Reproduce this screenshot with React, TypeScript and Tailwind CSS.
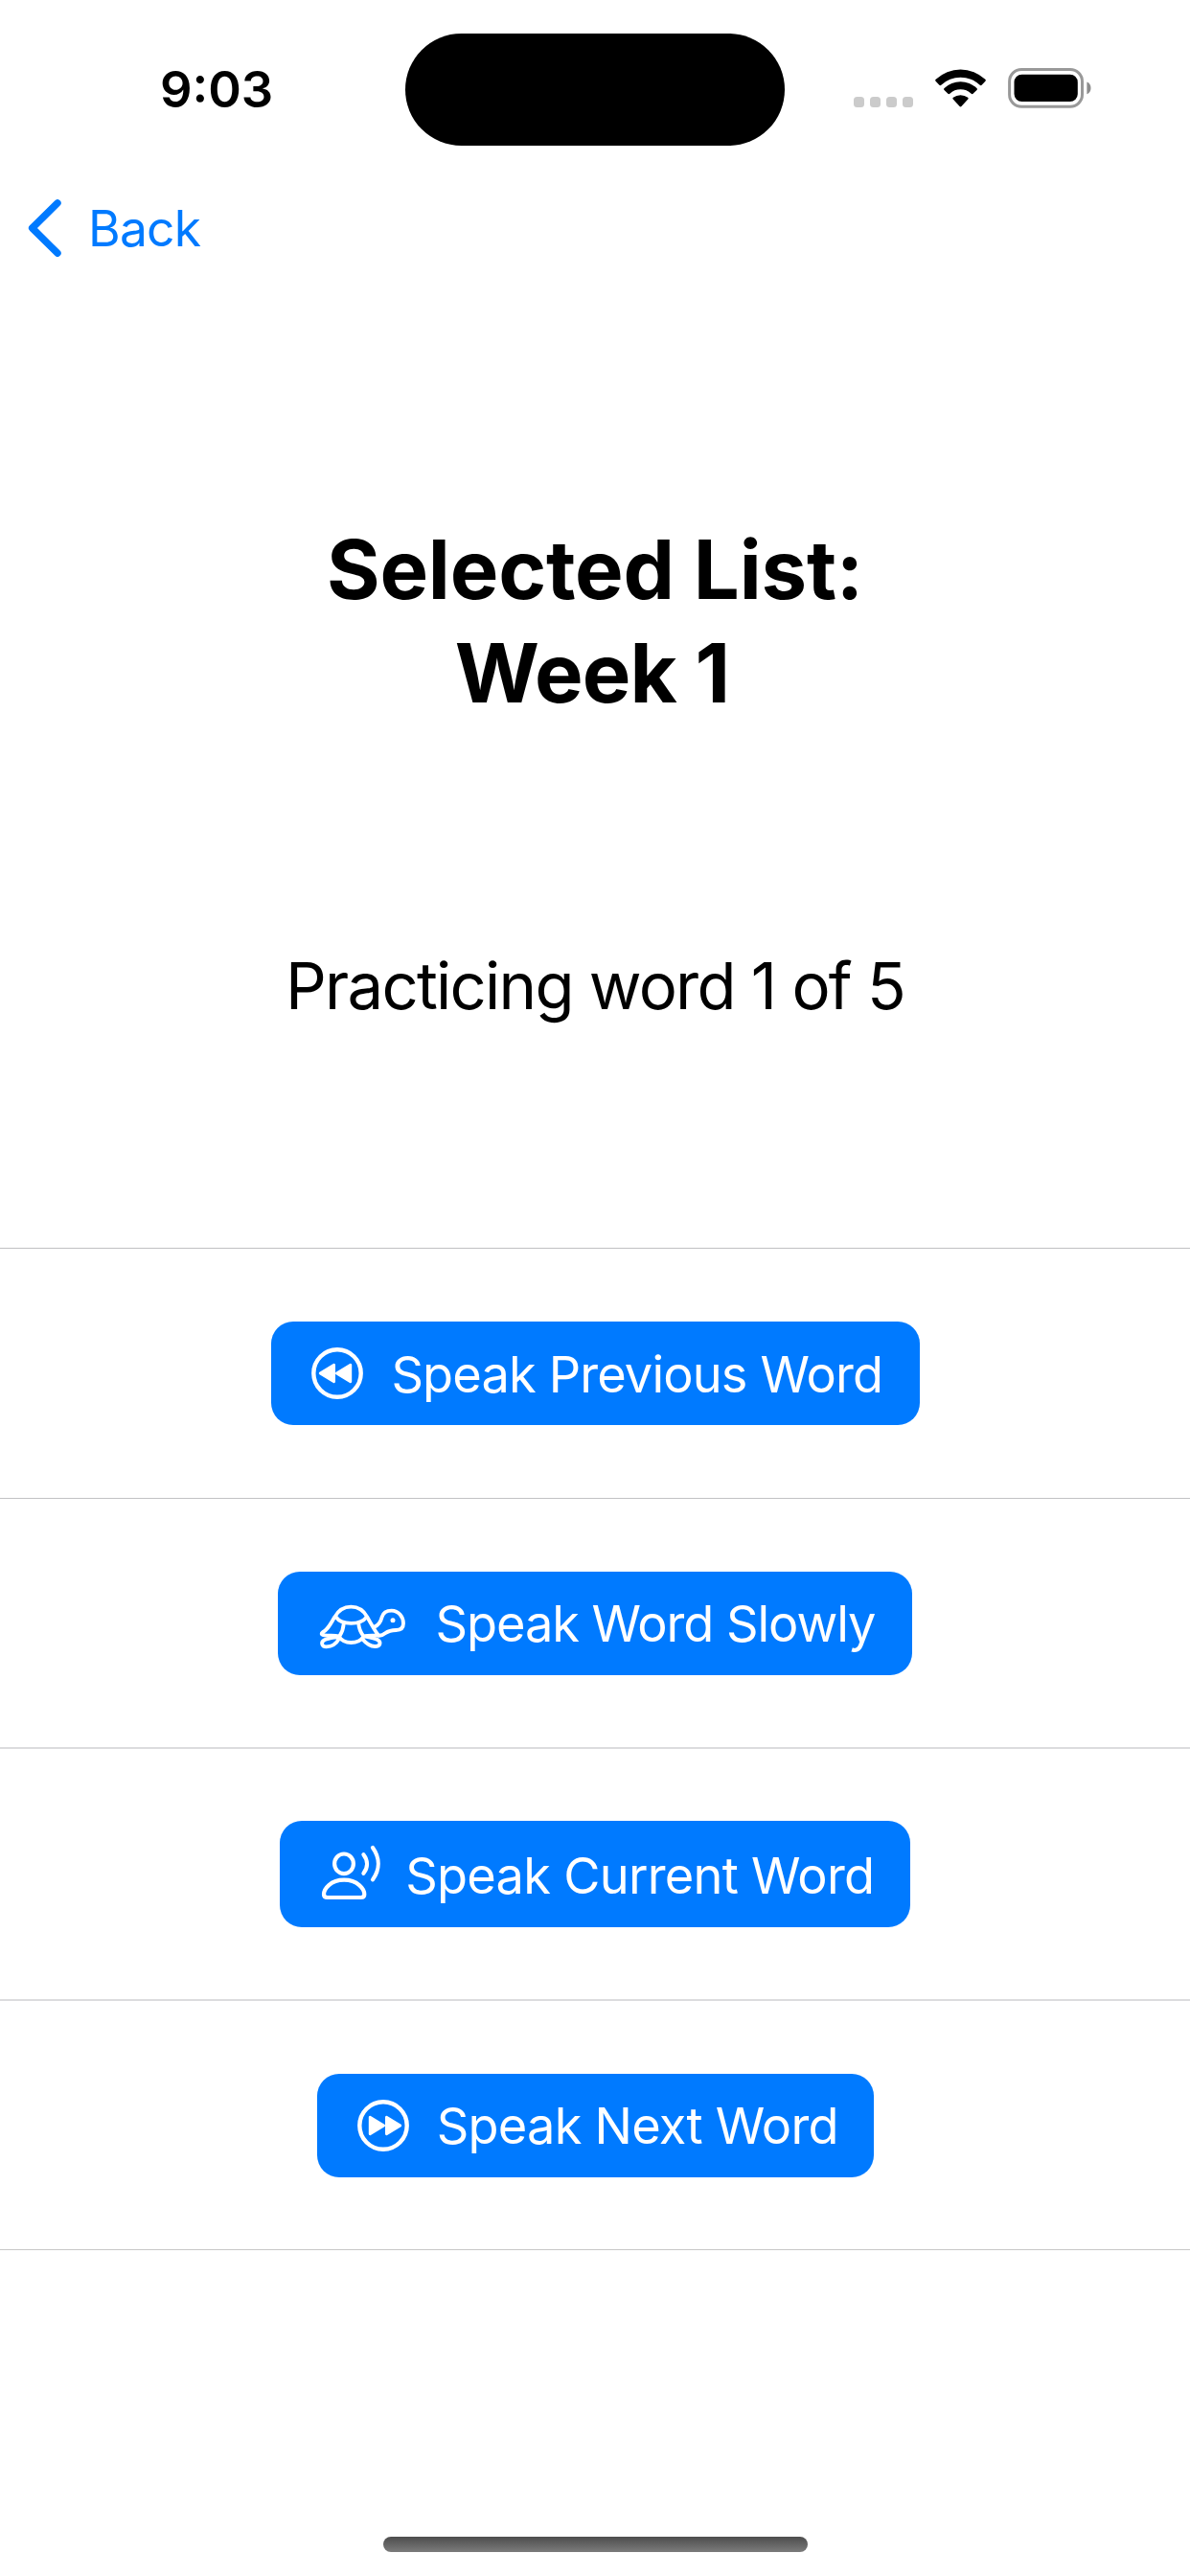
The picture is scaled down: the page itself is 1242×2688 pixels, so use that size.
import type { ReactNode } from 'react';

function WifiIcon() {
  return (
    <svg className="block h-[40px] w-[53px]" viewBox="0 0 53 40" fill="#000">
      <path d="M.7 10.8A37.5 37.5 0 0 1 52.3 10.8Q53.3 11.8 52.4 12.7L48.6 16.7Q47.7 17.6 46.7 16.7A29.5 29.5 0 0 0 6.3 16.7Q5.3 17.6 4.4 16.7L.6 12.7Q-.3 11.8 .7 10.8Z" />
      <path d="M9.6 20A24.6 24.6 0 0 1 43.4 20Q44.4 21 43.5 21.9L39.6 25.7Q38.7 26.6 37.7 25.7A16.5 16.5 0 0 0 15.3 25.7Q14.3 26.6 13.4 25.7L9.5 21.9Q8.6 21 9.6 20Z" />
      <path d="M18.8 29.8A12.5 12.5 0 0 1 34.2 29.8Q35.2 30.7 34.3 31.6L27.4 39Q26.5 39.9 25.6 39L18.7 31.6Q17.8 30.7 18.8 29.8Z" />
    </svg>
  );
}

function BatteryIcon() {
  return (
    <svg className="block h-[42px] w-[87px]" viewBox="0 0 87 42">
      <rect x="1.6" y="1.5" width="75.9" height="38.8" rx="12.5" fill="none" stroke="#999" strokeWidth="3" />
      <rect x="6.5" y="6.7" width="66.3" height="28.4" rx="8" fill="#000" />
      <path d="M82.4 14.6C87.9 16.8 87.9 25 82.4 27.2Z" fill="#8c8c8c" />
    </svg>
  );
}

function SkipIcon({ forward }: { forward?: boolean }) {
  return (
    <svg className={forward ? 'block h-[54px] w-[54px] -scale-x-100' : 'block h-[54px] w-[54px]'} viewBox="0 0 54 54">
      <circle cx="27" cy="27" r="24.7" fill="none" stroke="#fff" strokeWidth="4.4" />
      <path
        d="M9.2 27L23.6 18.2V35.8ZM26.4 27L40.8 18.2V35.8Z"
        fill="#fff"
        stroke="#fff"
        strokeWidth="2.8"
        strokeLinejoin="round"
      />
    </svg>
  );
}

function TurtleIcon() {
  return (
    <svg
      className="block h-[45px] w-[89px] overflow-visible"
      viewBox="42 75 267 135"
      fill="none"
      stroke="#fff"
      strokeWidth="11.5"
      strokeLinecap="round"
      strokeLinejoin="round"
    >
      <path d="M224 168C212 152 202 134 190 112C178 90 162 80 139 80C118 80 100 90 88 112C72 138 66 152 50 160C44 164 48 169 56 169C72 171 88 168 100 172C110 186 124 192 139 192C156 192 170 186 180 172C194 168 210 171 226 169" />
      <path d="M92 112C110 138 168 138 188 112" />
      <path d="M116 134C115 150 111 160 103 172" />
      <path d="M163 134C164 150 169 160 178 172" />
      <path d="M103 178C95 192 80 205 62 205C46 205 44 190 56 184C68 178 82 177 98 174" />
      <path d="M174 180C184 192 200 204 214 204C232 204 234 190 222 183C212 178 200 176 184 173" />
      <path d="M212 143C226 138 233 124 236 112C240 98 252 92 266 92C288 92 303 112 303 132C303 146 294 153 280 153C262 153 254 157 246 163C240 168 232 171 224 170" />
      <circle cx="270" cy="122" r="7.5" fill="#fff" stroke="none" />
    </svg>
  );
}

function PersonWaveIcon() {
  return (
    <svg
      className="block h-[56px] w-[61px] overflow-visible"
      viewBox="0 0 61 56"
      fill="none"
      stroke="#fff"
      strokeWidth="4.2"
      strokeLinecap="round"
      strokeLinejoin="round"
    >
      <ellipse cx="23" cy="18.8" rx="9.9" ry="10.3" />
      <path d="M5.6 54Q2 54 2 50.8C2 45 9 35.7 23.1 35.7C37.2 35.7 44.3 45 44.3 50.8Q44.3 54 40.7 54Z" />
      <path d="M43.4 9.2C48.2 15.4 48.2 22.6 43.4 28.8" />
      <path d="M53 2C60.6 12.6 60.6 24.8 53 35.4" />
    </svg>
  );
}

function ActionButton({ className, icon, children }: { className: string; icon: ReactNode; children: ReactNode }) {
  return (
    <button
      className={`flex items-center rounded-[23px] bg-[#007aff] text-[52.3px] leading-[64px] whitespace-nowrap text-white ${className}`}
    >
      {icon}
      {children}
    </button>
  );
}

export default function App() {
  return (
    <div className="flex h-[2688px] w-[1242px] flex-col overflow-hidden bg-white font-[Inter,sans-serif] text-black">
      <header className="mt-[35px] flex h-[116.5px] shrink-0 items-center pl-[166.9px]">
        <time className="-mt-[1px] w-[256.5px] shrink-0 text-[52.5px] leading-[64px] font-semibold">9:03</time>
        <div className="h-full w-[395.2px] shrink-0 rounded-full bg-black" />
        <div className="ml-[72.4px] flex gap-[6.1px] pt-[26px]">
          <span className="size-[10.9px] rounded-[3.5px] bg-[#cbcbcb]" />
          <span className="size-[10.9px] rounded-[3.5px] bg-[#cbcbcb]" />
          <span className="size-[10.9px] rounded-[3.5px] bg-[#cbcbcb]" />
          <span className="size-[10.9px] rounded-[3.5px] bg-[#cbcbcb]" />
        </div>
        <div className="-mt-[3px] ml-[23px] flex items-center gap-[23.5px]">
          <WifiIcon />
          <BatteryIcon />
        </div>
      </header>

      <nav className="mt-[54.5px] flex h-[64px] shrink-0 items-center pl-[29px]">
        <svg className="block h-[60px] w-[36px]" viewBox="0 0 36 60" fill="none">
          <path
            d="M31 3.9L4.6 30L31 56.2"
            stroke="#007aff"
            strokeWidth="7.4"
            strokeLinecap="round"
            strokeLinejoin="round"
          />
        </svg>
        <span className="ml-[27px] text-[51.5px] leading-[64px] tracking-[-0.8px] text-[#007aff]">Back</span>
      </nav>

      <h1 className="mt-[270.5px] shrink-0 text-center text-[85px] leading-[108.3px] font-bold tracking-[-0.2px]">
        Selected List:
        <span className="block pr-[6px] tracking-[-0.8px]">Week 1</span>
      </h1>

      <p className="mt-[232px] shrink-0 text-center text-[67px] leading-[80px] tracking-[-1.75px]">
        Practicing word 1 of 5
      </p>

      <ul className="mt-auto h-[1046px] shrink-0 border-b border-[#c8c8c8]">
        <li className="flex h-[261px] justify-center border-t border-[#c0c0c2] pt-[76px]">
          <ActionButton className="h-[108px] w-[677px] pl-[42.4px] tracking-[-0.84px]" icon={<SkipIcon />}>
            <span className="ml-[29.5px] pt-[1px]">Speak Previous Word</span>
          </ActionButton>
        </li>
        <li className="flex h-[260px] justify-center border-t border-[#c2c2c4] pt-[75.5px]">
          <ActionButton
            className="h-[108px] w-[662px] pl-[44px] tracking-[-1.06px]"
            icon={
              <span className="pt-[8px]">
                <TurtleIcon />
              </span>
            }
          >
            <span className="ml-[31.5px] pt-[1px]">Speak Word Slowly</span>
          </ActionButton>
        </li>
        <li className="flex h-[263px] justify-center border-t-2 border-[#dcdcde] pt-[75px]">
          <ActionButton
            className="h-[110.5px] w-[658px] pl-[44px] tracking-[-0.72px]"
            icon={
              <span className="pb-[3px]">
                <PersonWaveIcon />
              </span>
            }
          >
            <span className="ml-[26.2px] pt-[3px]">Speak Current Word</span>
          </ActionButton>
        </li>
        <li className="flex h-[261px] justify-center border-t-2 border-[#dcdcde] pt-[75.5px]">
          <ActionButton className="h-[108px] w-[581px] pl-[42.2px] tracking-[-0.77px]" icon={<SkipIcon forward />}>
            <span className="ml-[29.1px]">Speak Next Word</span>
          </ActionButton>
        </li>
      </ul>

      <footer className="mt-[299px] flex h-[41px] shrink-0 justify-center">
        <div className="h-[15.7px] w-[443px] rounded-full bg-linear-to-b from-[#4d4d4d] to-[#7c7c7c]" />
      </footer>
    </div>
  );
}
